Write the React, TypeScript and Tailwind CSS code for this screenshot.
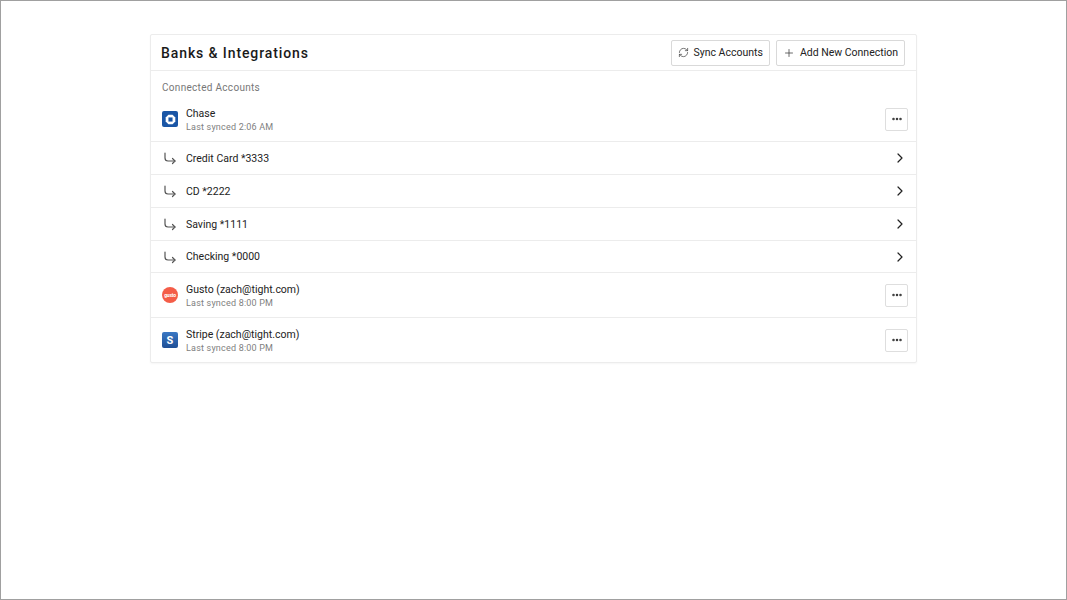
import { RefreshCw, Plus, ChevronRight, MoreHorizontal } from 'lucide-react';

const subAccounts = ['Credit Card *3333', 'CD *2222', 'Saving *1111', 'Checking *0000'];

function ChaseLogo() {
  return (
    <div className="w-4 h-4 rounded-[2px] bg-[#1a56a6] flex items-center justify-center">
      <svg viewBox="0 0 16 16" className="w-[11px] h-[11px]">
        <path d="M5 1 L11 1 L15 5 L15 11 L11 15 L5 15 L1 11 L1 5 Z" fill="#fff" />
        <rect x="5" y="5" width="6" height="6" fill="#1a56a6" />
      </svg>
    </div>
  );
}

function GustoLogo() {
  return (
    <div className="w-4 h-4 rounded-full bg-[#f45d48] flex items-center justify-center">
      <span className="text-[5px] leading-none text-white font-bold tracking-[-0.2px]">gusto</span>
    </div>
  );
}

function StripeLogo() {
  return (
    <div className="w-4 h-4 rounded-[2px] bg-gradient-to-b from-[#3a78c4] to-[#1f4f96] flex items-center justify-center">
      <span className="text-[11px] leading-none text-white font-bold">S</span>
    </div>
  );
}

function SubArrow() {
  return (
    <svg viewBox="0 0 16 16" className="w-4 h-4 ml-[3px] text-[#555]" fill="none" stroke="currentColor" strokeWidth={1.2} strokeLinecap="round" strokeLinejoin="round">
      <path d="M3 3 V8 A3 3 0 0 0 6 11 H13" />
      <path d="M10.5 8.5 L13 11 L10.5 13.5" />
    </svg>
  );
}

function MoreButton() {
  return (
    <button className="w-[23px] h-[23px] border border-[#dedede] rounded-[2px] flex items-center justify-center bg-white">
      <MoreHorizontal className="w-3 h-3 text-[#333]" strokeWidth={3} />
    </button>
  );
}

function Connection({ logo, name, synced, last }: { logo: React.ReactNode; name: string; synced: string; last?: boolean }) {
  return (
    <div className={`flex items-center pl-[11px] pr-[8px] ${last ? 'h-[44px]' : 'h-[45px] border-b border-[#ececec]'}`}>
      <div className="flex items-center gap-2 flex-1">
        {logo}
        <div className="flex flex-col pt-px">
          <span className="text-[10.5px] leading-[14px] text-[#222]">{name}</span>
          <span className="text-[9px] leading-[12px] text-[#808080] tracking-[0.2px]">{synced}</span>
        </div>
      </div>
      <MoreButton />
    </div>
  );
}

export default function App() {
  return (
    <div
      className="w-[1067px] h-[600px] bg-white border border-[#a0a0a0] pt-[33px] pl-[149px]"
      style={{ fontFamily: 'Roboto, "Noto Sans", sans-serif' }}
    >
      <div className="w-[767px] bg-white border border-[#ececec] rounded-[2px] shadow-[0_1px_2px_rgba(0,0,0,0.04)]">
        {/* Header */}
        <div className="h-[36px] flex items-center justify-between pl-[10px] pr-[11px] border-b border-[#ececec]">
          <h1 className="text-[14px] font-medium text-[#1a1a1a] tracking-[0.9px] pt-[2px]">Banks &amp; Integrations</h1>
          <div className="flex items-center gap-[6px]">
            <button className="h-[26px] px-[6px] flex items-center gap-[5px] border border-[#d9d9d9] rounded-[2px] text-[10.5px] text-[#222]">
              <RefreshCw className="w-[11px] h-[11px] text-[#444]" strokeWidth={1.6} />
              Sync Accounts
            </button>
            <button className="h-[26px] px-[6px] flex items-center gap-[5px] border border-[#d9d9d9] rounded-[2px] text-[10.5px] text-[#222]">
              <Plus className="w-3 h-3 text-[#444]" strokeWidth={1.6} />
              Add New Connection
            </button>
          </div>
        </div>

        <div className="pt-[11px] pb-[3px] px-[11px]">
          <p className="text-[10px] leading-[12px] text-[#777] tracking-[0.3px]">Connected Accounts</p>
        </div>

        <Connection logo={<ChaseLogo />} name="Chase" synced="Last synced 2:06 AM" />

        {subAccounts.map((acct, i) => (
          <div
            key={acct}
            className={`flex items-center pl-[8px] pr-[8px] border-b border-[#ececec] ${i === subAccounts.length - 1 ? 'h-[32px]' : 'h-[33px]'}`}
          >
            <div className="flex items-center gap-[8px] flex-1">
              <SubArrow />
              <span className="text-[10.5px] text-[#222] pt-px">{acct}</span>
            </div>
            <ChevronRight className="w-4 h-4 text-[#222]" strokeWidth={1.8} />
          </div>
        ))}

        <Connection logo={<GustoLogo />} name="Gusto (zach@tight.com)" synced="Last synced 8:00 PM" />
        <Connection logo={<StripeLogo />} name="Stripe (zach@tight.com)" synced="Last synced 8:00 PM" last />
      </div>
    </div>
  );
}
